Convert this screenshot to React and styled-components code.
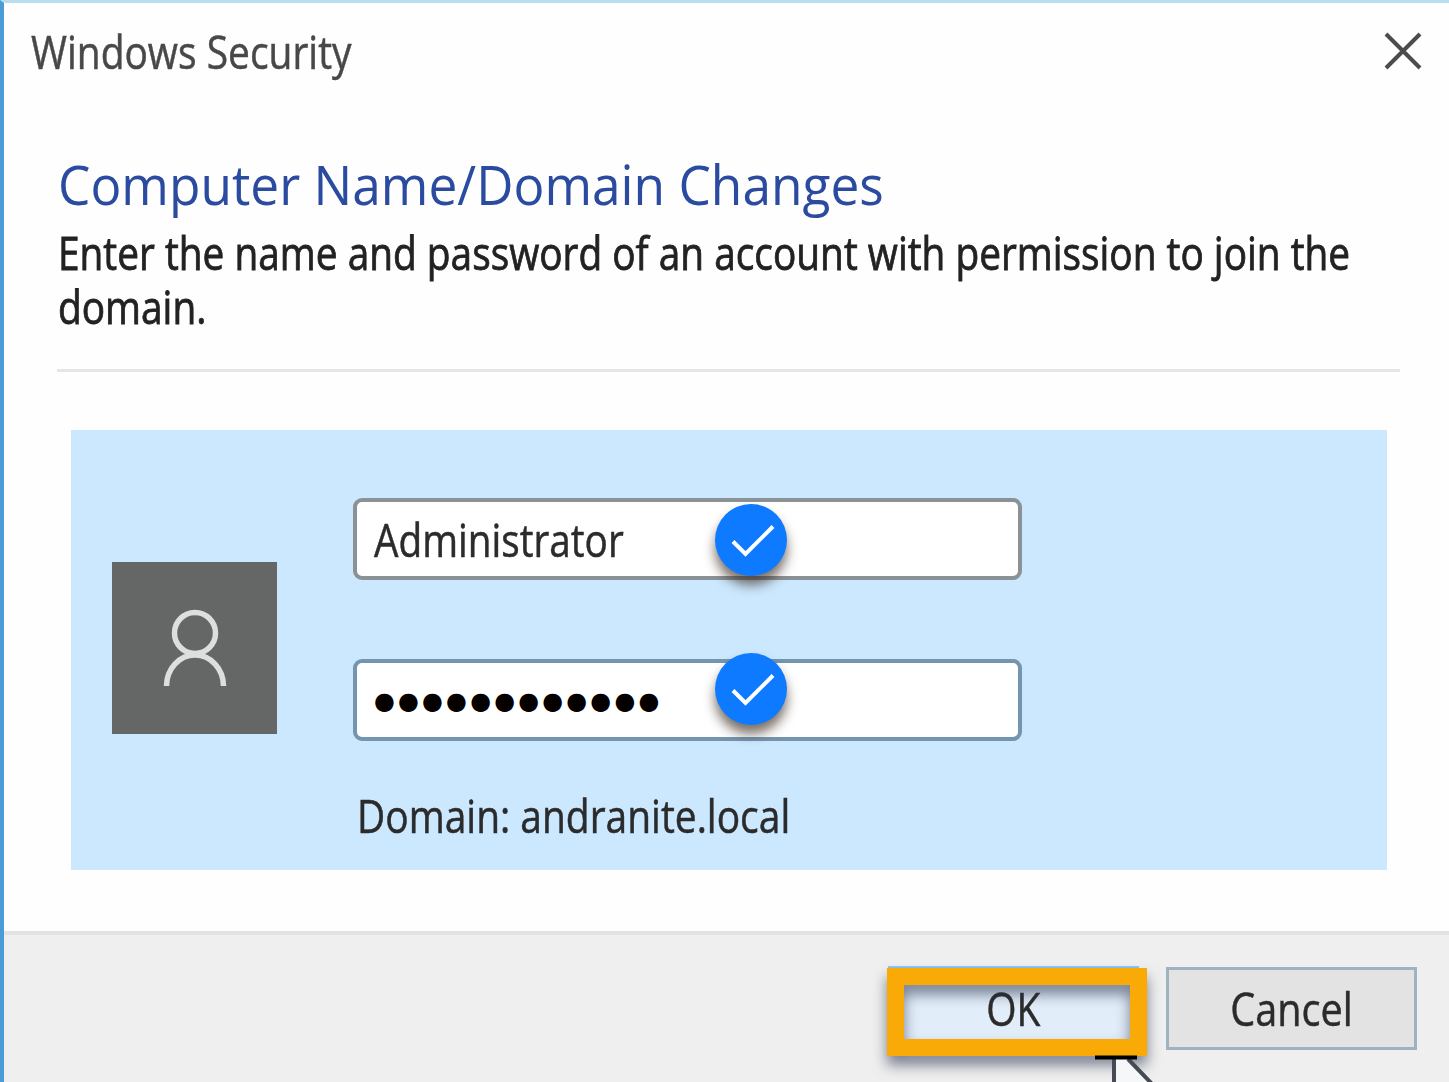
import React from "react";
import styled, { createGlobalStyle } from "styled-components";

const GlobalStyle = createGlobalStyle`
  *, *::before, *::after { box-sizing: border-box; }
  body { margin: 0; overflow: hidden; background: #fff; }
`;

const Dialog = styled.main`
  display: flex;
  flex-direction: column;
  width: 1449px;
  height: 1082px;
  overflow: hidden;
  background: #fefefe;
  border-top: 3px solid #b8dcf0;
  border-left: 4px solid #4b9cd6;
  font-family: "Open Sans", "Noto Sans", sans-serif;
  color: #222;
`;

const Text = styled.span`
  display: block;
  flex: none;
  white-space: nowrap;
  font-size: 45px;
  line-height: 54px;
  color: ${(p) => p.$color || "#2b2b2b"};
  -webkit-text-stroke: 0.5px currentColor;
  transform: scaleX(${(p) => p.$stretch || 0.865});
  transform-origin: ${(p) => p.$origin || "left"} center;
`;

const Heading = styled.h1`
  margin: 0;
  white-space: nowrap;
  font-size: 55px;
  font-weight: 400;
  line-height: 84px;
  color: #2a4b9f;
  transform: scaleX(0.935);
  transform-origin: left center;
`;

const Message = styled.p`
  width: 1540px;
  margin: 0;
  font-size: 45px;
  line-height: 54px;
  color: #222;
  -webkit-text-stroke: 0.8px currentColor;
  transform: scaleX(0.8625);
  transform-origin: left center;
`;

const TitleBar = styled.header`
  display: flex;
  align-items: center;
  justify-content: space-between;
  height: 98px;
  flex: none;
  padding: 0 26px 0 27px;
`;

const CloseButton = styled.button`
  display: flex;
  margin-bottom: 3px;
  padding: 0;
  border: 0;
  background: none;
`;

const Intro = styled.section`
  flex: none;
  height: 230px;
  margin: 41px 49px 0 53px;
  padding-left: 1px;
  border-bottom: 3px solid #e6e6e6;
`;

const Credentials = styled.section`
  display: flex;
  flex: none;
  width: 1316px;
  height: 440px;
  margin: 58px 0 0 67px;
  padding-left: 41px;
  background: #cce8ff;
`;

const Avatar = styled.div`
  display: flex;
  justify-content: center;
  width: 165px;
  height: 172px;
  margin-top: 132px;
  padding-top: 47px;
  background: #656666;
`;

const Fields = styled.div`
  display: flex;
  flex-direction: column;
  gap: 79px;
  width: 669px;
  margin-left: 76px;
  padding-top: 68px;
`;

const Field = styled.div`
  position: relative;
  display: flex;
  align-items: center;
  flex: none;
  height: 82px;
  padding: 2px 0 0 17px;
  background: #fff;
  border: 4px solid ${(p) => p.$edge};
  border-radius: 9px;
`;

const Bullets = styled.span`
  font-family: "DejaVu Sans", sans-serif;
  font-size: 24px;
  line-height: 40px;
  letter-spacing: 3.1px;
  color: #050000;
`;

const Badge = styled.span`
  position: absolute;
  left: 358px;
  top: ${(p) => p.$top}px;
  display: flex;
  width: 72px;
  height: 72px;
  border-radius: 50%;
  background: #0d7aff;
  box-shadow: 0 9px 12px rgba(50, 35, 25, 0.65);
`;

const DomainLine = styled.div`
  margin-top: -31px;
  padding-left: 4px;
`;

const Footer = styled.footer`
  display: flex;
  justify-content: flex-end;
  align-items: flex-start;
  gap: 27px;
  flex: none;
  height: 151px;
  margin-top: 61px;
  padding: 32px 32px 0 0;
  background: #efefef;
  border-top: 4px solid #e3e3e3;
`;

const Button = styled.button`
  position: relative;
  display: flex;
  align-items: center;
  justify-content: center;
  width: 251px;
  height: 83px;
  padding: 0;
  font-family: inherit;
  background: ${(p) => (p.$primary ? "#e1edf8" : "#e3e3e3")};
  border: 3px solid ${(p) => (p.$primary ? "#7cc4fb" : "#9fb2c0")};
  box-shadow: ${(p) => (p.$primary ? "0 -1px 0 #8fcbf8" : "none")};
`;

const Highlight = styled.span`
  position: absolute;
  left: -4px;
  top: -2px;
  width: 260px;
  height: 88px;
  border: 17px solid #f9aa07;
  filter: drop-shadow(0 9px 7px rgba(40, 50, 75, 0.6));
`;

const Pointer = styled.svg`
  position: absolute;
  left: 201px;
  top: 85px;
`;

function CheckBadge({ top }) {
  return (
    <Badge $top={top}>
      <svg width="72" height="72" viewBox="0 0 72 72" fill="none">
        <path d="M18 37.5 L30.5 50 L58 22.5" stroke="#fff" strokeWidth="4" />
      </svg>
    </Badge>
  );
}

export default function App() {
  return (
    <>
      <GlobalStyle />
      <Dialog>
        <TitleBar>
          <Text $color="#484848">Windows Security</Text>
          <CloseButton aria-label="Close">
            <svg width="40" height="40" viewBox="0 0 40 40">
              <path d="M3 3 L37 37 M37 3 L3 37" stroke="#4c4c4c" strokeWidth="4" />
            </svg>
          </CloseButton>
        </TitleBar>
        <Intro>
          <Heading>Computer Name/Domain Changes</Heading>
          <Message>
            Enter the name and password of an account with permission to join the domain.
          </Message>
        </Intro>
        <Credentials>
          <Avatar>
            <svg width="66" height="82" viewBox="0 0 66 82" fill="none" stroke="#dedede" strokeWidth="5.5">
              <circle cx="33" cy="24" r="20.5" />
              <path d="M4.5 77 A28.5 31 0 0 1 61.500 77" />
            </svg>
          </Avatar>
          <Fields>
            <Field $edge="#8b9296">
              <Text $stretch={0.86}>Administrator</Text>
              <CheckBadge top={1.5} />
            </Field>
            <Field $edge="#7595af">
              <Bullets>●●●●●●●●●●●●</Bullets>
              <CheckBadge top={-10.5} />
            </Field>
            <DomainLine>
              <Text>Domain: andranite.local</Text>
            </DomainLine>
          </Fields>
        </Credentials>
        <Footer>
          <Button $primary>
            <Text $origin="center">OK</Text>
            <Highlight />
            <Pointer width="64" height="34" viewBox="0 0 64 34">
              <path d="M22 4 L22 34 L64 34 L35 4 Z" fill="#f6f7f9" />
              <path d="M22 4 V34 M36 4 L62 31" fill="none" stroke="#454b52" strokeWidth="4" />
              <path d="M3 2.500 H45" stroke="#000" strokeWidth="4" />
            </Pointer>
          </Button>
          <Button>
            <Text $origin="center" $stretch={0.88}>Cancel</Text>
          </Button>
        </Footer>
      </Dialog>
    </>
  );
}
